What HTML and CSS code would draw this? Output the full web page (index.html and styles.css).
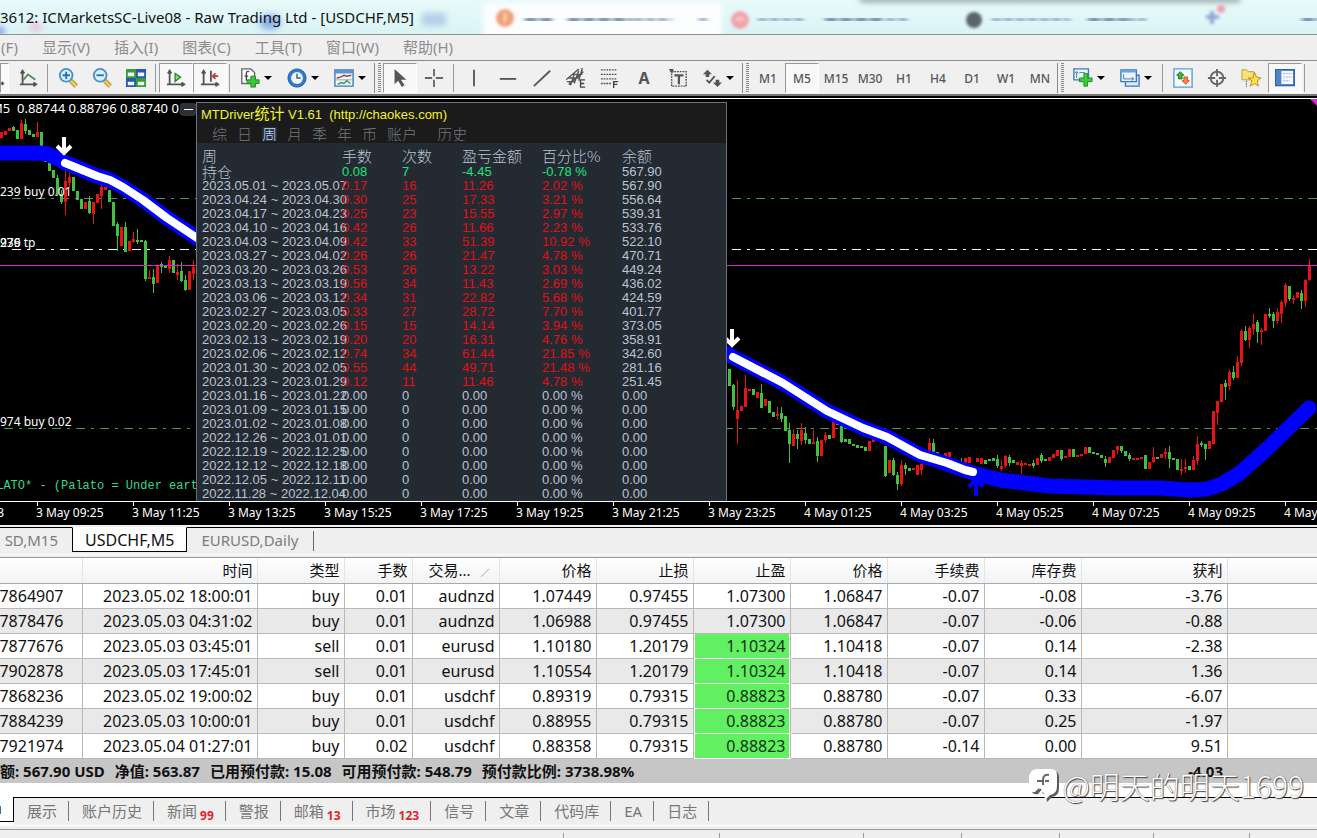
FILE: index.html
```html
<!DOCTYPE html>
<html lang="zh-CN">
<head>
<meta charset="utf-8">
<title>ICMarketsSC-Live08 - Raw Trading Ltd</title>
<link rel="stylesheet" href="styles.css">
</head>
<body>
<div class="app">
<header class="titlebar">
  <svg class="glass" viewBox="0 0 1317 34" preserveAspectRatio="xMinYMin slice" aria-hidden="true">
    <defs>
      <filter id="soft" x="-30%" y="-80%" width="160%" height="260%"><feGaussianBlur stdDeviation="3"/></filter>
      <filter id="mid" x="-10%" y="-80%" width="120%" height="260%"><feGaussianBlur stdDeviation="2.4"/></filter>
      <filter id="dot" x="-30%" y="-30%" width="160%" height="160%"><feGaussianBlur stdDeviation="1.5"/></filter>
    </defs>
    <rect x="483" y="3" width="239" height="40" fill="#fcfdfe" filter="url(#mid)"/>
    <g filter="url(#soft)">
      <ellipse cx="270" cy="22" rx="11" ry="8" fill="#8fb4e6"/>
      <ellipse cx="36" cy="27" rx="6" ry="4" fill="#f0b8d4"/>
      <ellipse cx="0" cy="31" rx="4" ry="4" fill="#6c7fe0"/>
      <rect x="422" y="13" width="24" height="13" fill="#b4cfe8"/>
      <rect x="860" y="-4" width="380" height="6" fill="#8a9c9c"/>
    </g>
    <g filter="url(#dot)">
      <circle cx="505" cy="18" r="9" fill="#f0a078"/><path d="M505 13v9" stroke="#f8d0bc" stroke-width="3"/>
      <circle cx="740" cy="20" r="9" fill="#f2a3aa"/><path d="M736 19h8" stroke="#f8d0d4" stroke-width="3"/>
      <circle cx="974" cy="20" r="8" fill="#5c646c"/>
      <path d="M1206 17h13M1212 11v13" stroke="#94a8d6" stroke-width="4"/><circle cx="1221" cy="9" r="4" fill="#ee9fae"/>
    </g>
    <g filter="url(#mid)">
      <g stroke="#7f93b8" fill="none" stroke-width="11" stroke-dasharray="12 3">
        <path d="M525 20h27M568 20h64"/><path d="M1088 20h38M1302 20h20"/><path d="M825 20h60"/>
      </g>
      <g stroke="#9db1d4" fill="none" stroke-width="9" stroke-dasharray="9 3">
        <path d="M634 20h38M758 20h48M886 20h24M992 20h78M1126 20h20M699 19h8"/>
      </g>
    </g>
  </svg>
  <h1>3612: ICMarketsSC-Live08 - Raw Trading Ltd - [USDCHF,M5]</h1>
</header>

<nav class="menu" aria-label="菜单">
  <button>(F)</button><button>显示(V)</button><button>插入(I)</button><button>图表(C)</button><button>工具(T)</button><button>窗口(W)</button><button>帮助(H)</button>
</nav>

<div class="toolbar" role="toolbar">
  <button class="cut on" aria-label="蜡烛图"><svg viewBox="0 0 9 22"><path d="M0 18h3M1 16l2 2-2 2" stroke="#555" fill="none" stroke-width="2"/></svg></button>
  <button aria-label="折线图"><svg viewBox="0 0 22 22"><path d="M5 3v15M2 18h17M3 6l2-3 2 3M17 16l3 2-3 2" fill="none" stroke="#555" stroke-width="2"/><path d="M5 14l6-7 8 6" fill="none" stroke="#4d8a52" stroke-width="2"/></svg></button>
  <i class="sep"></i>
  <button aria-label="放大"><svg viewBox="0 0 22 22"><path d="M14 14l6 6" stroke="#a3862f" stroke-width="5"/><path d="M14 14l6 6" stroke="#f0cd57" stroke-width="3"/><circle cx="9" cy="8" r="7" fill="#d8f1fb" stroke="#4a8fc6" stroke-width="2"/><path d="M5 8h8M9 4v8" stroke="#2c6cae" stroke-width="2"/></svg></button>
  <button aria-label="缩小"><svg viewBox="0 0 22 22"><path d="M14 14l6 6" stroke="#a3862f" stroke-width="5"/><path d="M14 14l6 6" stroke="#f0cd57" stroke-width="3"/><circle cx="9" cy="8" r="7" fill="#d8f1fb" stroke="#4a8fc6" stroke-width="2"/><path d="M5 8h8" stroke="#2c6cae" stroke-width="2"/></svg></button>
  <button aria-label="平铺窗口"><svg viewBox="0 0 22 22"><path d="M0 1h11v10H0zM11 11h11v10H11z" fill="#3b9a3b"/><path d="M11 1h11v10H11zM0 11h11v10H0z" fill="#2858b0"/><path d="M2 5h7v4H2zM13 5h7v4h-7zM2 15h7v4H2zM13 15h7v4h-7z" fill="#eef8ee"/></svg></button>
  <i class="sep"></i>
  <button class="on" aria-label="自动滚动"><svg viewBox="0 0 22 22"><path d="M4 3v16M1 18h18M2 6l2-3 2 3M17 16l3 2-3 2" fill="none" stroke="#555" stroke-width="2"/><path d="M10 6l6 4-6 5z" fill="#7fe07f" stroke="#268a36" stroke-width="1.5"/></svg></button>
  <button class="on" aria-label="图表平移"><svg viewBox="0 0 22 22"><path d="M4 3v16M1 18h18M2 6l2-3 2 3M17 16l3 2-3 2M12 3v12" fill="none" stroke="#555" stroke-width="2"/><path d="M20 9h-6M17 6l-3 3 3 3" fill="none" stroke="#bb3f33" stroke-width="2"/></svg></button>
  <i class="sep"></i>
  <button class="drop" aria-label="指标"><svg viewBox="0 0 22 22"><path d="M2 1h10l4 4v12H2z" fill="#fff" stroke="#666" stroke-width="1.5"/><path d="M10 4c-3-1-3 1-3 3v7M5 9h4" fill="none" stroke="#444" stroke-width="1.5"/><path d="M12 9h5v4h4v4h-4v4h-5v-4H8v-4h4z" fill="#38c838" stroke="#148a1c"/></svg></button>
  <button class="drop" aria-label="周期"><svg viewBox="0 0 22 22"><circle cx="11" cy="11" r="10" fill="#2f7ccc" stroke="#1c549c"/><circle cx="11" cy="11" r="6.5" fill="#edf6fc"/><path d="M11 6v5h4" fill="none" stroke="#555" stroke-width="1.5"/></svg></button>
  <button class="drop" aria-label="模板"><svg viewBox="0 0 22 22"><path d="M1 2h20v18H1z" fill="#eef6fd" stroke="#3f78b8" stroke-width="1.5"/><path d="M1 2h20v4H1z" fill="#5a94d2"/><path d="M3 11l4-1 4-2 3 1 5-1" fill="none" stroke="#a04030" stroke-width="1.5"/><path d="M2 13h18" stroke="#7aa4d0"/><path d="M4 18l4-2 3 1 3-3 4 3" fill="none" stroke="#3a9a4a" stroke-width="1.5"/></svg></button>
  <i class="grip"></i>
  <button class="on" aria-label="光标"><svg viewBox="0 0 22 22"><path d="M5 1v17l4-4 4 7 3-2-4-6h6z" fill="#555"/></svg></button>
  <button aria-label="十字准线"><svg viewBox="0 0 22 22"><path d="M11 1v8M11 13v8M1 11h8M13 11h8" stroke="#666" stroke-width="2"/></svg></button>
  <i class="sep"></i>
  <button aria-label="垂直线"><svg viewBox="0 0 22 22"><path d="M11 2v18" stroke="#555" stroke-width="2"/></svg></button>
  <button aria-label="水平线"><svg viewBox="0 0 22 22"><path d="M2 12h18" stroke="#555" stroke-width="2"/></svg></button>
  <button aria-label="趋势线"><svg viewBox="0 0 22 22"><path d="M2 20L20 3" stroke="#555" stroke-width="2"/></svg></button>
  <button aria-label="通道"><svg viewBox="0 0 22 22"><path d="M0 13L14 1M3 18L19 4M1 15h9M3 11h11M7 7h11M5 19L9 7M9 17l5-14M14 14l4-14" stroke="#555" stroke-width="1.5"/><path d="M21 13h-5v8h5M16 17h4" fill="none" stroke="#444" stroke-width="1.5"/></svg></button>
  <button aria-label="斐波那契"><svg viewBox="0 0 22 22"><path d="M1 2h18M1 7h18M1 12h18M1 17h12" stroke="#555" stroke-width="1.5" stroke-dasharray="2 1"/><path d="M20 15h-5v7M15 18h4" fill="none" stroke="#444" stroke-width="1.5"/></svg></button>
  <button aria-label="文字"><b class="letter">A</b></button>
  <button aria-label="文字标签"><svg viewBox="0 0 22 22"><path d="M4 4h16v16H4z" fill="none" stroke="#555" stroke-width="1.5" stroke-dasharray="2 1"/><path d="M1 1h5v4H3z" fill="#555"/><path d="M7 8h10M12 8v10" stroke="#555" stroke-width="2.5"/></svg></button>
  <button class="drop" aria-label="箭头"><svg viewBox="0 0 22 22"><path d="M6 2l5 5H8v3H4V7H1zM17 21l-5-5h3v-3h4v3h3z" fill="#555"/><path d="M5 13l3 3 6-7" fill="none" stroke="#555" stroke-width="2"/></svg></button>
  <i class="grip"></i>
  <button>M1</button><button class="on">M5</button><button>M15</button><button>M30</button><button>H1</button><button>H4</button><button>D1</button><button>W1</button><button>MN</button>
  <i class="grip"></i>
  <button class="drop" aria-label="新图表"><svg viewBox="0 0 22 22"><path d="M1 1h16v12H1z" fill="#eaf4fd" stroke="#3f78b8" stroke-width="1.5"/><path d="M4 4v7M2 6l2-2 2 2M7 5h6" fill="none" stroke="#5577a0"/><path d="M12 6h4v5h5v4h-5v5h-4v-5H7v-4h5z" fill="#38d038" stroke="#148a1c"/></svg></button>
  <button class="drop" aria-label="配置"><svg viewBox="0 0 22 22"><path d="M6 8h15v12H6z" fill="#dcebfa" stroke="#3f78b8" stroke-width="1.5"/><path d="M1 2h17v13H1z" fill="#eaf4fd" stroke="#3f78b8" stroke-width="1.5"/><path d="M1 2h17v3H1z" fill="#6ea3dc"/><path d="M4 7v5h11M13 10l2 2-2 2" fill="none" stroke="#4a6c98"/></svg></button>
  <i class="sep"></i>
  <button aria-label="市场报价"><svg viewBox="0 0 22 22"><path d="M1 1h20v20H1z" fill="#f6fbff" stroke="#5d9bd8" stroke-width="1.5"/><path d="M8 4l4 4h-2v4H6V8H4z" fill="#38b838" stroke="#187a20"/><path d="M14 18l4-4h-2v-4h-4v4h-2z" fill="#ff8a50" stroke="#d04820"/></svg></button>
  <button aria-label="数据窗口"><svg viewBox="0 0 22 22"><circle cx="11" cy="11" r="7" fill="none" stroke="#666" stroke-width="2"/><path d="M11 1v8M11 13v8M1 11h8M13 11h8" stroke="#666" stroke-width="2"/></svg></button>
  <button aria-label="导航"><svg viewBox="0 0 22 22"><path d="M1 2h5l2 2h6v9H1z" fill="#f7e27a" stroke="#b99a35"/><path d="M6 14v7" stroke="#555" stroke-dasharray="2 1"/><path d="M15 5l2 5 5 1-4 3 1 6-4-3-5 3 2-6-4-3h5z" fill="#ffe04a" stroke="#b58a18"/></svg></button>
  <button class="on" aria-label="终端"><svg viewBox="0 0 22 22"><path d="M1 2h20v17H1z" fill="#f4f9ff" stroke="#2f66b0" stroke-width="2"/><path d="M2 3h5v15H2z" fill="#4d86cc"/><path d="M9 6h10M9 10h10M9 14h7" stroke="#9aa8c0" stroke-dasharray="2 1"/></svg></button>
  <i class="sep"></i>
</div>

<main class="chart">
<svg class="plot" viewBox="0 96 1317 429" role="img" aria-label="USDCHF M5">
  <path d="M0 98.5H1317" stroke="#fff"/>
  <path d="M1310 99h7v7z" fill="#e020e0"/>
  <g fill="none" stroke-dasharray="9 6 3 6" shape-rendering="crispEdges">
    <path d="M12 198.5H1317M4 428.5H1317" stroke="#4a9a50"/>
    <path d="M12 249.5H1317" stroke="#fff"/>
  </g>
  <g fill="none" shape-rendering="crispEdges" transform="translate(.5 0)">
    <g stroke="#43bf43">
      <path d="M13 126V131M25 119V134M57 175V196M61 190V204M89 196V214M117 222V251M125 222V252M137 229V244M145 240V281M153 269V293M161 262V273M181 262V282M185 275V291M733 384V410M761 384V408M781 407V422M789 423V463M797 430V449M805 427V444M817 437V462M841 422V443M885 446V477M893 458V476M897 472V490M905 463V475M933 439V453M961 458V472M997 455V468M1009 455V466M1033 460V468M1041 453V463M1061 450V461M1105 456V467M1121 446V453M1129 453V461M1145 455V469M1169 446V468M1201 441V447M1205 444V460M1225 380V400M1233 366V380M1245 326V341M1257 320V343M1269 308V318M1273 312V328M1289 286V301M1301 290V309"/>
      <path stroke-width="3" d="M17 130V139M13 127V131M25 124V131M29 130V135M33 134V137M41 132V146M45 160V162M49 163V171M53 170V178M57 178V194M61 194V202M73 177V191M77 191V200M81 199V209M89 201V213M109 190V202M113 202V226M117 224V236M125 227V252M137 240V242M141 240V242M145 241V279M153 277V284M161 264V267M165 265V268M173 260V273M181 271V281M185 280V290M729 369V386M733 385V407M753 389V395M761 393V408M769 401V413M773 412V417M781 413V419M785 416V431M789 430V444M797 434V439M805 433V440M809 439V444M817 441V456M829 435V439M837 422V425M841 426V442M845 439V442M849 439V444M853 444V446M857 445V448M861 446V448M865 447V451M885 446V476M893 460V475M897 475V484M905 465V469M909 468V471M933 443V452M937 452V455M985 460V464M989 459V461M993 458V461M997 459V466M1009 457V463M1013 460V463M1033 463V466M1041 455V461M1045 459V461M1061 450V459M1073 449V457M1089 447V453M1093 452V454M1097 453V455M1101 455V458M1105 459V463M1121 446V451M1125 451V456M1129 455V459M1145 455V469M1157 457V459M1169 452V459M1173 458V460M1177 459V470M1189 466V470M1201 443V445M1205 444V449M1225 383V387M1233 372V378M1245 331V340M1257 322V332M1269 314V316M1273 314V321M1289 286V299M1301 293V301"/>
    </g>
    <g stroke="#e81414">
      <path d="M21 120V139M37 122V137M65 170V215M69 171V187M93 202V224M101 182V209M133 232V243M149 270V279M169 256V273M177 264V280M193 260V280M737 380V444M745 375V407M777 407V420M793 429V446M801 423V445M813 430V444M825 432V443M901 460V486M921 455V475M929 438V453M1001 460V471M1005 455V468M1021 460V474M1117 446V454M1153 447V463M1165 448V459M1181 459V475M1185 459V473M1193 456V470M1197 436V465M1217 401V425M1229 370V390M1237 356V378M1241 329V366M1249 326V348M1253 314V335M1261 328V345M1277 308V324M1281 300V323M1285 283V307M1293 295V304M1305 279V307M1309 259V281"/>
      <path stroke-width="3" d="M1 132V138M5 131V135M9 128V131M21 123V139M37 132V137M65 181V202M69 177V183M85 202V209M93 202V214M97 194V203M101 187V196M105 187V190M121 227V246M129 241V251M133 239V242M149 277V279M157 265V283M169 260V269M177 272V275M189 271V290M193 267V274M737 410V419M741 406V411M745 388V407M749 389V391M757 392V398M765 399V406M777 414V416M793 434V446M801 430V441M813 442V444M821 440V456M825 435V440M833 421V438M869 441V451M873 439V442M889 460V473M901 465V484M913 468V470M917 465V475M921 464V470M929 443V451M945 453V457M949 452V457M965 458V463M969 457V463M977 458V462M981 458V464M1001 466V469M1005 456V466M1017 462V465M1021 463V466M1025 463V465M1029 464V466M1037 458V465M1049 457V461M1053 454V458M1057 450V456M1065 456V458M1069 449V457M1077 455V457M1081 454V456M1085 447V454M1109 457V463M1113 450V458M1117 446V450M1133 458V460M1137 458V460M1141 457V459M1149 462V469M1153 457V462M1161 454V458M1165 452V454M1181 469V471M1185 467V469M1193 460V470M1197 444V461M1209 441V449M1213 411V444M1217 401V413M1221 384V402M1229 372V386M1237 362V378M1241 331V363M1249 328V340M1253 324V329M1261 330V332M1265 314V331M1277 312V321M1281 302V314M1285 285V303M1293 298V300M1297 292V298M1305 280V301M1309 265V280"/>
    </g>
  </g>
  <rect x="0" y="265" width="1317" height="1" fill="#d424d4"/>
  <g fill="none" stroke-linecap="round" stroke-linejoin="round">
    <path stroke="#0000ff" stroke-width="15" d="M-8 153H40L48 154 64 162 97 176 110 180 123 187 143 200 167 218 203 242M720 350L733 357 783 383 827 411 863 428 887 437 920 455 947 464 976 474 1000 480 1050 486 1120 488 1160 488 1190 490 1207 489 1222 484 1240 473 1270 446 1309 408"/>
    <path stroke="#fff" stroke-width="8" d="M65 163L97 176 110 180 123 187 143 200 167 218 203 242M733 357L783 383 827 411 863 428 887 437 920 455 947 463 965 470 973 472"/>
  </g>
  <g fill="none" stroke-width="4">
    <path stroke="#fff" d="M64 137V153M57 146l7 7 7-7M732 329V345M725 338l7 7 7-7"/>
    <path stroke="#0000ff" d="M976 479V496M969 487l7-8 7 8"/>
  </g>
  <g fill="#fff" class="note">
    <text class="ohlc" x="-9" y="113">M5</text><text class="ohlc" x="17" y="113">0.88744 0.88796 0.88740 0.88780</text>
    <text x="0" y="196">239 buy 0.01</text><text x="0" y="247">239</text><text x="0" y="247">976 tp</text><text x="0" y="426">974 buy 0.02</text>
  </g>
  <text class="mono" x="-11" y="489">ALATO* - (Palato = Under earth)</text>
  <path fill="none" stroke="#fff" shape-rendering="crispEdges" d="M0 501.5H1317M37.5 502v4M133.5 502v4M229.5 502v4M325.5 502v4M421.5 502v4M517.5 502v4M613.5 502v4M709.5 502v4M805.5 502v4M901.5 502v4M997.5 502v4M1093.5 502v4M1189.5 502v4M1285.5 502v4"/>
  <g fill="#fff" class="note">
    <text x="4" y="517" text-anchor="end">3 May 2023</text><text x="36" y="517">3 May 09:25</text><text x="132" y="517">3 May 11:25</text><text x="228" y="517">3 May 13:25</text><text x="324" y="517">3 May 15:25</text><text x="420" y="517">3 May 17:25</text><text x="516" y="517">3 May 19:25</text><text x="612" y="517">3 May 21:25</text><text x="708" y="517">3 May 23:25</text><text x="804" y="517">4 May 01:25</text><text x="900" y="517">4 May 03:25</text><text x="996" y="517">4 May 05:25</text><text x="1092" y="517">4 May 07:25</text><text x="1188" y="517">4 May 09:25</text><text x="1284" y="517">4 May 11:25</text>
  </g>
</svg>

<section class="stats" aria-label="MTDriver">
  <button class="fold" aria-label="收起"></button>
  <div class="stats-head">
    <h2>MTDriver<span>统计</span> V1.61&nbsp; (http://chaokes.com)</h2>
    <div class="stats-tabs"><button>综</button><button>日</button><button class="sel">周</button><button>月</button><button>季</button><button>年</button><button>币</button><button>账户</button><button>历史</button></div>
  </div>
  <table class="stats-table">
    <colgroup><col class="s-range"><col class="s-n"><col class="s-n"><col class="s-m"><col class="s-m"><col></colgroup>
    <thead><tr><th>周<th>手数<th>次数<th>盈亏金额<th>百分比%<th>余额</thead>
    <tbody>
    <tr class="open"><th>持仓<td>0.08<td>7<td>-4.45<td>-0.78 %<td>567.90
    </tbody>
    <tbody class="won">
    <tr><td>2023.05.01 ~ 2023.05.07<td>0.17<td>16<td>11.26<td>2.02 %<td>567.90
    <tr><td>2023.04.24 ~ 2023.04.30<td>0.30<td>25<td>17.33<td>3.21 %<td>556.64
    <tr><td>2023.04.17 ~ 2023.04.23<td>0.25<td>23<td>15.55<td>2.97 %<td>539.31
    <tr><td>2023.04.10 ~ 2023.04.16<td>0.42<td>26<td>11.66<td>2.23 %<td>533.76
    <tr><td>2023.04.03 ~ 2023.04.09<td>0.42<td>33<td>51.39<td>10.92 %<td>522.10
    <tr><td>2023.03.27 ~ 2023.04.02<td>0.26<td>26<td>21.47<td>4.78 %<td>470.71
    <tr><td>2023.03.20 ~ 2023.03.26<td>0.53<td>26<td>13.22<td>3.03 %<td>449.24
    <tr><td>2023.03.13 ~ 2023.03.19<td>0.56<td>34<td>11.43<td>2.69 %<td>436.02
    <tr><td>2023.03.06 ~ 2023.03.12<td>0.34<td>31<td>22.82<td>5.68 %<td>424.59
    <tr><td>2023.02.27 ~ 2023.03.05<td>0.33<td>27<td>28.72<td>7.70 %<td>401.77
    <tr><td>2023.02.20 ~ 2023.02.26<td>0.15<td>15<td>14.14<td>3.94 %<td>373.05
    <tr><td>2023.02.13 ~ 2023.02.19<td>0.20<td>20<td>16.31<td>4.76 %<td>358.91
    <tr><td>2023.02.06 ~ 2023.02.12<td>0.74<td>34<td>61.44<td>21.85 %<td>342.60
    <tr><td>2023.01.30 ~ 2023.02.05<td>0.55<td>44<td>49.71<td>21.48 %<td>281.16
    <tr><td>2023.01.23 ~ 2023.01.29<td>0.12<td>11<td>11.46<td>4.78 %<td>251.45
    </tbody>
    <tbody>
    <tr><td>2023.01.16 ~ 2023.01.22<td>0.00<td>0<td>0.00<td>0.00 %<td>0.00
    <tr><td>2023.01.09 ~ 2023.01.15<td>0.00<td>0<td>0.00<td>0.00 %<td>0.00
    <tr><td>2023.01.02 ~ 2023.01.08<td>0.00<td>0<td>0.00<td>0.00 %<td>0.00
    <tr><td>2022.12.26 ~ 2023.01.01<td>0.00<td>0<td>0.00<td>0.00 %<td>0.00
    <tr><td>2022.12.19 ~ 2022.12.25<td>0.00<td>0<td>0.00<td>0.00 %<td>0.00
    <tr><td>2022.12.12 ~ 2022.12.18<td>0.00<td>0<td>0.00<td>0.00 %<td>0.00
    <tr><td>2022.12.05 ~ 2022.12.11<td>0.00<td>0<td>0.00<td>0.00 %<td>0.00
    <tr><td>2022.11.28 ~ 2022.12.04<td>0.00<td>0<td>0.00<td>0.00 %<td>0.00
    </tbody>
  </table>
</section>
</main>

<nav class="chart-tabs" aria-label="图表">
  <button class="first">SD,M15</button><button class="sel">USDCHF,M5</button><button class="last">EURUSD,Daily</button>
</nav>

<section class="terminal">
<table class="trades">
  <colgroup><col class="c82"><col class="c175"><col class="c87"><col class="c68"><col class="c87"><col class="c97"><col class="c97"><col class="c97"><col class="c97"><col class="c97"><col class="c97"><col class="c146"><col></colgroup>
  <thead><tr><th><th>时间<th>类型<th>手数<th class="sort">交易...<small>∕</small><th>价格<th>止损<th>止盈<th>价格<th>手续费<th>库存费<th>获利<th></thead>
  <tbody>
  <tr><td>17864907<td>2023.05.02 18:00:01<td>buy<td>0.01<td>audnzd<td>1.07449<td>0.97455<td>1.07300<td>1.06847<td>-0.07<td>-0.08<td>-3.76<td>
  <tr><td>17878476<td>2023.05.03 04:31:02<td>buy<td>0.01<td>audnzd<td>1.06988<td>0.97455<td>1.07300<td>1.06847<td>-0.07<td>-0.06<td>-0.88<td>
  <tr><td>17877676<td>2023.05.03 03:45:01<td>sell<td>0.01<td>eurusd<td>1.10180<td>1.20179<td class="hit">1.10324<td>1.10418<td>-0.07<td>0.14<td>-2.38<td>
  <tr><td>17902878<td>2023.05.03 17:45:01<td>sell<td>0.01<td>eurusd<td>1.10554<td>1.20179<td class="hit">1.10324<td>1.10418<td>-0.07<td>0.14<td>1.36<td>
  <tr><td>17868236<td>2023.05.02 19:00:02<td>buy<td>0.01<td>usdchf<td>0.89319<td>0.79315<td class="hit">0.88823<td>0.88780<td>-0.07<td>0.33<td>-6.07<td>
  <tr><td>17884239<td>2023.05.03 10:00:01<td>buy<td>0.01<td>usdchf<td>0.88955<td>0.79315<td class="hit">0.88823<td>0.88780<td>-0.07<td>0.25<td>-1.97<td>
  <tr><td>17921974<td>2023.05.04 01:27:01<td>buy<td>0.02<td>usdchf<td>0.88358<td>0.79315<td class="hit">0.88823<td>0.88780<td>-0.14<td>0.00<td>9.51<td>
  </tbody>
  <tfoot><tr><td colspan="11" class="sum"><span>额: 567.90 USD</span><span>净值: 563.87</span><span>已用预付款: 15.08</span><span>可用预付款: 548.79</span><span>预付款比例: 3738.98%</span><td>-4.03<td></tfoot>
</table>
<nav class="term-tabs" aria-label="终端">
  <button class="sel" aria-label="交易"></button><div class="tabs-run"><button>展示</button><button>账户历史</button><button>新闻<b>99</b></button><button>警报</button><button>邮箱<b>13</b></button><button>市场<b>123</b></button><button>信号</button><button>文章</button><button>代码库</button><button>EA</button><button>日志</button></div>
</nav>
<div class="watermark">
  <svg viewBox="0 0 30 34" aria-hidden="true"><path d="M9 2h14q6 0 6 6v11q0 8-7 9l-5 5-1-7q-4-1-5-5l-4 4q-5 1-6-5V9q2-7 8-7z" fill="#5c5c5c" transform="translate(1 1)"/><path d="M8 1h14q6 0 6 6v11q0 8-7 9l-5 5-1-7q-4-1-5-5l-4 4q-5 1-6-5V8q2-7 8-7z" fill="#fff"/><path d="M20 7q-6-1-6 5v5M8 13h5M16 13h4M12 21l-4 5" fill="none" stroke="#666" stroke-width="2"/></svg>
  <span>@明天的明天1699</span>
</div>
</section>
<footer class="status"><i></i><i></i><i></i><i></i><i></i><i></i><i></i><i></i></footer>
</div>
</body>
</html>
```
FILE: styles.css
```css
* { box-sizing: border-box; }
body { margin: 0; background: #efefef; font-family: "Noto Sans", "Noto Sans CJK SC", sans-serif; color: #111; }
button { border: 0; background: none; padding: 0; margin: 0; font: inherit; color: inherit; white-space: nowrap; }
h1, h2 { margin: 0; font-weight: 400; }
.app { display: flex; flex-direction: column; min-height: 100vh; overflow: hidden; }

.titlebar { position: relative; height: 35px; overflow: hidden; border-bottom: 1px solid #8e9494; background: linear-gradient(#e9fafa, #d9f4f5); }
.glass { position: absolute; left: 0; top: 0; width: 100%; height: 100%; }
.titlebar h1 { position: relative; font-size: 15px; line-height: 34px; white-space: nowrap; }

.menu { display: flex; gap: 24px; height: 26px; padding-left: 1px; border-bottom: 1px solid #8a8a8a; color: #8c8c8c; font-size: 15px; line-height: 22px; }
.menu button { height: 24px; }

.toolbar { display: flex; align-items: center; height: 35px; padding: 1px 0 0; background: #f0f0f0; border-bottom: 2px solid #777; color: #555; font-size: 12px; font-weight: 500; }
.toolbar button { display: flex; flex: none; align-items: center; justify-content: center; width: 34px; height: 30px; }
.toolbar svg { display: block; width: 20px; height: 20px; }
.toolbar .cut { width: 9px; margin-right: 2px; justify-content: flex-start; }
.toolbar .cut svg { width: 9px; }
.toolbar .on { border: 1px solid #999; border-right-color: #fff; border-bottom-color: #fff; background: #f8f8f8; }
.toolbar .drop { width: 47px; gap: 4px; padding-left: 7px; justify-content: flex-start; }
.drop::after { content: ""; border: 4px solid transparent; border-top-color: #000; border-bottom: 0; }
.letter { font-size: 16px; font-weight: 700; }
.sep { flex: none; width: 1px; height: 28px; margin: 0 3px 0 2px; background: #999; }
.grip { flex: none; width: 9px; height: 30px; border-left: 1px solid #888; background: repeating-linear-gradient(#888 0 1px, #f0f0f0 1px 2px) 3px 0 / 3px 100% no-repeat; }

.chart { position: relative; overflow: hidden; background: #000; }
.plot { display: block; width: 100%; height: auto; }
.note { font-size: 12px; }
.ohlc { font-size: 13px; }
.mono { font-family: "Liberation Mono", monospace; font-size: 12px; fill: #35d98c; }

.stats { position: absolute; left: 196px; top: 6px; bottom: 24px; width: 531px; border: 1px solid #6d7278; border-bottom: 0; background: #242a32; color: #b9c4d4; font: 13px/14px "Liberation Sans", Arial, "Noto Sans CJK SC", sans-serif; }
.fold { position: absolute; right: 100%; top: 0; width: 16px; height: 13px; margin-right: 1px; border-radius: 3px; background: #2c3138; }
.fold::after { content: ""; display: block; width: 9px; height: 1px; margin: 0 auto; background: #fff; }
.stats-head { height: 40px; padding-left: 4px; background: #1b1b1b; }
.stats h2 { color: #f2f230; font-size: 13px; line-height: 22px; height: 24px; white-space: nowrap; }
.stats h2 span { font-size: 15px; }
.stats-tabs { display: flex; gap: 10px; padding-left: 11px; color: #75797e; font: 300 15px/14px "Noto Sans CJK SC", sans-serif; }
.stats-tabs button { height: 14px; overflow: hidden; }
.stats-tabs .sel { color: #c4d8f0; background: #22303f; }
.stats-tabs button:nth-last-child(1) { margin-left: 10px; }
.stats-table { width: 100%; table-layout: fixed; border-collapse: collapse; margin-top: 7px; }
.stats-table td, .stats-table th { height: 14px; padding: 0 0 0 5px; line-height: 14px; text-align: left; vertical-align: bottom; white-space: nowrap; }
.stats-table th { font: 300 15px/14px "Noto Sans CJK SC", sans-serif; }
.stats-table thead th { height: 15px; line-height: 12px; vertical-align: top; }
.s-range { width: 140px; }
.s-n { width: 60px; }
.s-m { width: 80px; }
.open td { color: #18e878; }
.won td { color: #e01018; }
.won td:first-child, .won td:last-child, .open td:last-child { color: #b9c4d4; }

.chart-tabs { display: flex; height: 31px; margin-top: 2px; border-top: 1px solid #000; border-bottom: 1px solid #999; background: linear-gradient(#efefef 0 26px, #fff 26px 27px, #efefef 27px); color: #7c7c7c; font-size: 15px; line-height: 22px; }
.chart-tabs button { height: 24px; }
.chart-tabs .first { width: 72px; padding-right: 14px; text-align: right; }
.chart-tabs .sel { margin-top: -1px; padding: 0 12px; height: 25px; border: 1px solid #000; border-top-color: #fff; background: #fff; color: #111; font-size: 16px; }
.chart-tabs .last { padding: 0 16px 0 14px; background: linear-gradient(#666, #666) right 3px / 1px 20px no-repeat; }

.terminal { position: relative; background: #fff; }
.trades { width: 100%; table-layout: fixed; border-collapse: collapse; font-size: 16px; }
.trades th, .trades td { height: 25px; padding: 0 4px 0 0; overflow: hidden; line-height: 24px; text-align: right; white-space: nowrap; }
.trades th { font-size: 15px; font-weight: 400; line-height: 22px; background: linear-gradient(#fff, #f1f2f4); border-right: 1px solid #e2e4e8; border-bottom: 1px solid #aaa; }
.trades tbody td { border-right: 1px solid #b8b8b8; border-bottom: 1px solid #b8b8b8; }
.trades tbody tr:nth-child(even) { background: #e9e9e9; }
.trades tbody td:first-child { padding-right: 18px; text-indent: -20px; }
.trades td:last-child, .trades th:last-child { border-right: 0; }
.trades .hit { background: #61f061; box-shadow: inset 1px 0 #fff, inset -1px 0 #fff; border-bottom-color: #fff; color: #143214; }
.sort small { margin: 0 5px 0 10px; font-size: 9px; line-height: 9px; color: #666; }
.trades tfoot td { background: #c6c6c6; font-size: 15px; font-weight: 700; }
.trades tfoot .sum { text-align: left; }
.sum span { margin-right: 10px; }
.c82 { width: 82px; } .c175 { width: 175px; } .c87 { width: 87px; } .c68 { width: 68px; } .c97 { width: 97px; } .c146 { width: 146px; }

.term-tabs { display: flex; margin-top: 14px; color: #777; font-size: 15px; line-height: 24px; }
.term-tabs > .sel { width: 14px; height: 25px; border: solid #000; border-width: 0 1px 1px 0; background: linear-gradient(#2f86b0, #3c6a8c) 0 9px / 1px 8px no-repeat #fff; }
.tabs-run { display: flex; flex: 1; height: 28px; border-top: 1px solid #000; background: #efefef; }
.tabs-run button { height: 25px; padding: 0 12px 0 13px; background: linear-gradient(#777, #777) right 3px / 1px 20px no-repeat; }
.tabs-run b { margin-left: 3px; color: #e0242c; font-size: 12px; vertical-align: -3px; line-height: 12px; }
.watermark { position: absolute; right: 13px; bottom: 22px; display: flex; align-items: center; gap: 4px; color: #fff; font: 300 30px/36px "Noto Sans CJK SC", sans-serif; text-shadow: 1px 1px 1px #444, 0 0 1px #666; }
.watermark svg { width: 30px; height: 34px; }

.status { display: grid; grid-template-columns: 564px 156px 144px 98px 98px 94px 96px 1fr; flex: 1; min-height: 12px; padding-top: 5px; background: linear-gradient(#fff 0 1px, #efefef 1px 4px, #999 4px 5px, #efefef 5px); }
.status i { margin-top: 3px; border-right: 1px solid #999; }
.status i:last-child { border: 0; }
```
